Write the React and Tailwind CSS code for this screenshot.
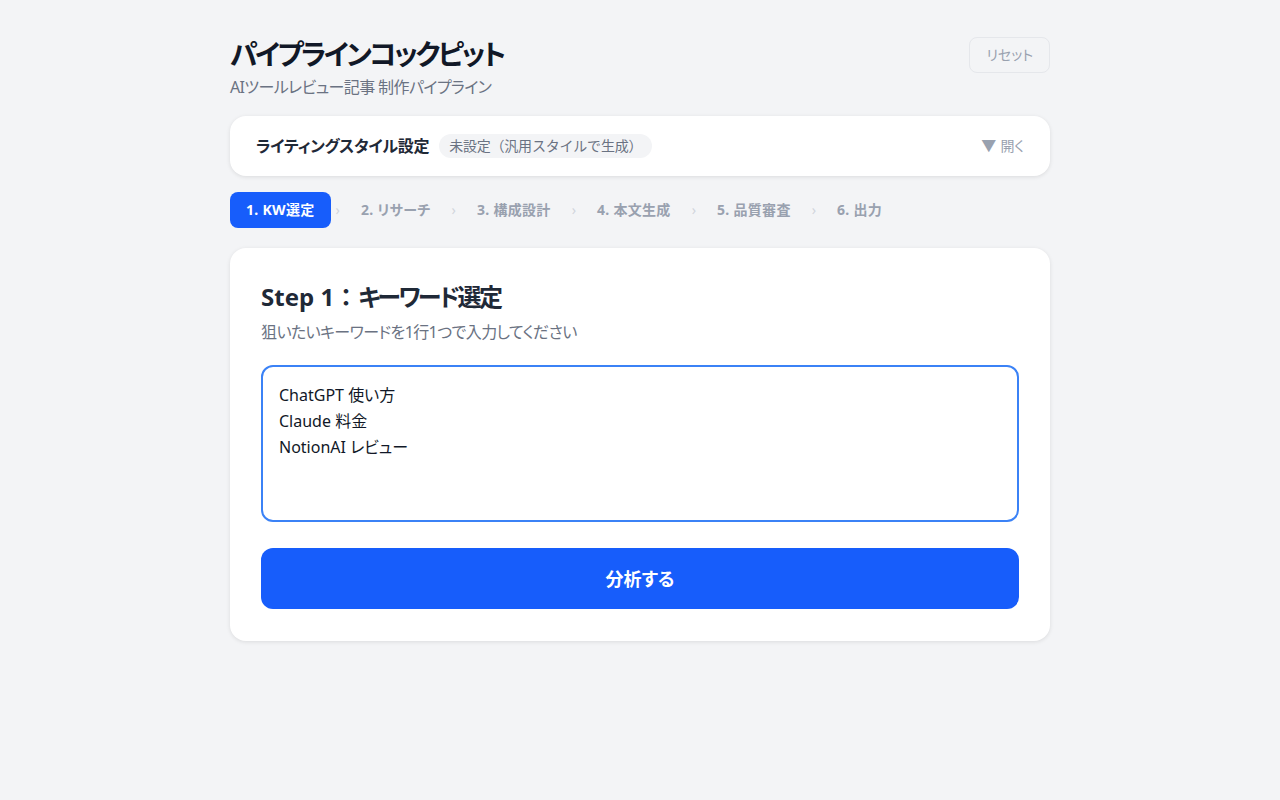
import React from "react";

const steps = ["1. KW選定", "2. リサーチ", "3. 構成設計", "4. 本文生成", "5. 品質審査", "6. 出力"];

function StepBar({ current }) {
  return (
    <div className="flex items-center gap-[5px] mt-4">
      {steps.map((label, i) => (
        <React.Fragment key={label}>
          <div
            className={`h-9 px-4 flex items-center rounded-lg text-sm font-bold tracking-[0.3px] ${
              i === current ? "bg-[#175dfb] text-white" : "text-gray-400"
            }`}
          >
            {label}
          </div>
          {i < steps.length - 1 && <span className="text-sm text-gray-300 leading-none">›</span>}
        </React.Fragment>
      ))}
    </div>
  );
}

export default function App() {
  return (
    <div
      className="min-h-screen bg-[#f3f4f6] text-[#111827] [font-feature-settings:'palt']"
      style={{ fontFamily: '"Noto Sans", "Noto Sans CJK JP", sans-serif' }}
    >
      <div className="w-[820px] mx-auto pt-[35px]">
        {/* header */}
        <div className="flex items-start justify-between">
          <div>
            <h1 className="text-[28px] font-bold leading-[38px] tracking-[-2.6px] text-[#111827]">パイプラインコックピット</h1>
            <p className="text-base text-gray-500 mt-[2px] tracking-[-0.6px]">AIツールレビュー記事 制作パイプライン</p>
          </div>
          <button className="mt-[2px] h-9 px-[16px] border border-gray-200 rounded-lg text-sm text-gray-400 bg-[#f3f4f6]">
            リセット
          </button>
        </div>

        {/* writing style */}
        <div className="mt-[17px] h-[60px] bg-white rounded-2xl shadow-[0_1px_4px_rgba(0,0,0,0.1)] px-[26px] flex items-center justify-between">
          <div className="flex items-center gap-[10px]">
            <span className="text-base font-bold text-[#1f2937] tracking-[-0.3px]">ライティングスタイル設定</span>
            <span className="h-6 px-[10px] flex items-center rounded-full bg-gray-100 text-sm text-gray-500 [font-feature-settings:normal] tracking-[-0.2px]">
              未設定（汎用スタイルで生成）
            </span>
          </div>
          <span className="text-sm text-gray-400 flex items-center gap-1">
            <span className="text-[15px] text-gray-400">▼</span>開く
          </span>
        </div>

        <StepBar current={0} />

        {/* main card */}
        <div className="mt-5 bg-white rounded-2xl shadow-[0_1px_4px_rgba(0,0,0,0.1)] px-[31px] pt-[33px] pb-[32px]">
          <h2 className="text-2xl font-bold text-[#1f2937] leading-8">
            Step 1<span className="[font-feature-settings:normal]">：</span>
            <span className="tracking-[-2.5px]">キーワード選定</span>
          </h2>
          <p className="text-base text-gray-500 mt-[7px] tracking-[-0.6px]">狙いたいキーワードを1行1つで入力してください</p>
          <textarea
            className="mt-[21px] block w-full h-[157px] border-2 border-[#3b82f6] rounded-xl px-4 py-[15px] text-base leading-[26px] text-[#111827] resize-none outline-none"
            defaultValue={"ChatGPT 使い方\nClaude 料金\nNotionAI レビュー"}
          />
          <button className="mt-[26px] w-full h-[61px] rounded-xl bg-[#175dfb] text-white text-lg font-bold">
            分析する
          </button>
        </div>
      </div>
    </div>
  );
}
